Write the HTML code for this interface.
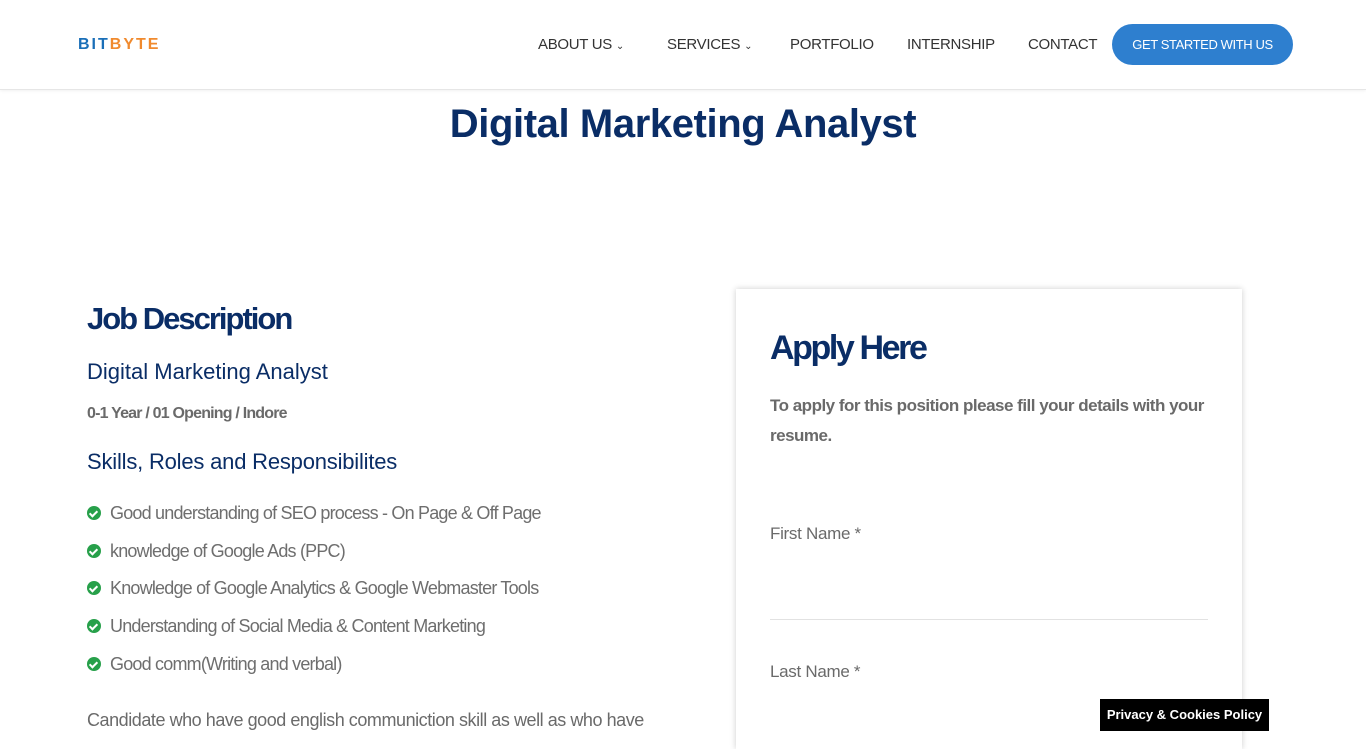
<!DOCTYPE html>
<html><head><meta charset="utf-8"><style>
*{margin:0;padding:0;box-sizing:border-box}
body{width:1366px;height:731px;overflow:hidden;background:#fff;font-family:"Liberation Sans",sans-serif;position:relative}
.hdr{position:absolute;left:0;top:0;width:1366px;height:90px;background:#fff;border-bottom:1px solid #e6e6e6;box-shadow:0 1px 3px rgba(0,0,0,.06)}
.logo{position:absolute;left:78px;top:36px;font-weight:bold;font-size:16px;letter-spacing:2px}
.logo .a{color:#1a6fb8}.logo .b{color:#f08a2e}
.nav{position:absolute;top:36px;font-size:15px;color:#333;letter-spacing:-0.3px}
.btn{position:absolute;left:1112px;top:24px;width:181px;height:41px;border-radius:21px;background:#2e7fcf;color:#fff;font-size:13px;line-height:41px;text-align:center;letter-spacing:-0.4px}
h1{position:absolute;left:0;width:1366px;top:102px;text-align:center;font-size:40px;color:#0a2d66;letter-spacing:-0.4px}
.t{position:absolute;color:#0a2d66;white-space:nowrap}
.g{position:absolute;color:#6a6a6a;white-space:nowrap}
.li{position:absolute;left:87px;font-size:18px;color:#6e6e6e;white-space:nowrap;letter-spacing:-0.8px}
.li i{display:inline-block;width:14px;height:14px;border-radius:50%;background:#27a04a;vertical-align:-1px;margin-right:9px;position:relative}
.li i:after{content:"";position:absolute;left:4px;top:2.5px;width:3px;height:6px;border:solid #fff;border-width:0 2px 2px 0;transform:rotate(45deg)}
.card{position:absolute;left:736px;top:289px;width:506px;height:460px;background:#fff;box-shadow:0 0 6px rgba(0,0,0,.2)}
.ck{position:absolute;left:1100px;top:699px;width:169px;height:32px;background:#000;color:#fff;font-size:13px;line-height:32px;text-align:center;font-weight:bold}
</style></head><body>
<div class="hdr">
<div class="logo"><span class="a">BIT</span><span class="b">BYTE</span></div>
<div class="nav" style="left:538px">ABOUT US <span style="font-size:10px">&#8964;</span></div>
<div class="nav" style="left:667px">SERVICES <span style="font-size:10px">&#8964;</span></div>
<div class="nav" style="left:790px">PORTFOLIO</div>
<div class="nav" style="left:907px">INTERNSHIP</div>
<div class="nav" style="left:1028px">CONTACT</div>
<div class="btn">GET STARTED WITH US</div>
</div>
<h1>Digital Marketing Analyst</h1>
<div class="t" style="left:87px;top:301px;font-size:31px;font-weight:bold;letter-spacing:-2px">Job Description</div>
<div class="t" style="left:87px;top:359px;font-size:22px;letter-spacing:0">Digital Marketing Analyst</div>
<div class="g" style="left:87px;top:405px;font-size:16px;font-weight:bold;letter-spacing:-0.8px">0-1 Year / 01 Opening / Indore</div>
<div class="t" style="left:87px;top:449px;font-size:22px;letter-spacing:-0.2px">Skills, Roles and Responsibilites</div>
<div class="li" style="top:503px"><i></i>Good understanding of SEO process - On Page &amp; Off Page</div>
<div class="li" style="top:541px"><i></i>knowledge of Google Ads (PPC)</div>
<div class="li" style="top:578px"><i></i>Knowledge of Google Analytics &amp; Google Webmaster Tools</div>
<div class="li" style="top:616px"><i></i>Understanding of Social Media &amp; Content Marketing</div>
<div class="li" style="top:654px"><i></i>Good comm(Writing and verbal)</div>
<div class="g" style="left:87px;top:710px;font-size:18px;letter-spacing:-0.45px">Candidate who have good english communiction skill as well as who have</div>
<div class="card">
<div class="t" style="left:34px;top:40px;font-size:34px;font-weight:bold;letter-spacing:-2.4px">Apply Here</div>
<div class="g" style="left:34px;top:102px;font-size:17px;font-weight:bold;line-height:30px;white-space:normal;width:460px;letter-spacing:-0.5px">To apply for this position please fill your details with your resume.</div>
<div class="g" style="left:34px;top:235px;font-size:17px;letter-spacing:-0.3px">First Name *</div>
<div style="position:absolute;left:34px;top:330px;width:438px;height:1px;background:#e2e2e2"></div>
<div class="g" style="left:34px;top:373px;font-size:17px;letter-spacing:-0.3px">Last Name *</div>
</div>
<div class="ck">Privacy &amp; Cookies Policy</div>
</body></html>
